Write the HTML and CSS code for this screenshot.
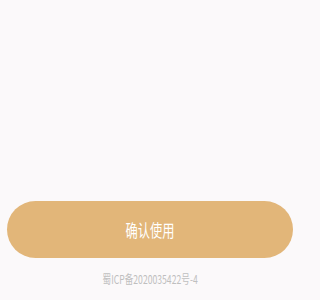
FILE: index.html
```html
<!DOCTYPE html>
<html lang="zh-CN">
<head>
<meta charset="utf-8">
<link rel="stylesheet" href="styles.css">
</head>
<body>
<main class="page">
  <button class="confirm"><span class="squeeze">确认使用</span></button>
  <p class="icp"><span class="squeeze">蜀ICP备2020035422号-4</span></p>
</main>
</body>
</html>
```
FILE: styles.css
```css
html, body {
  margin: 0;
  padding: 0;
  background: #fbf9fa;
}
body {
  font-family: "Noto Sans CJK SC", "Noto Sans", sans-serif;
}
.page {
  width: 300px;
  height: 300px;
  box-sizing: border-box;
  padding: 201px 7px 0;
  display: flex;
  flex-direction: column;
}
.confirm {
  height: 57px;
  border: 0;
  border-radius: 28.5px;
  background: #e2b679;
  color: #ffffff;
  font-family: inherit;
  font-size: 17px;
  line-height: 24px;
  padding: 0;
  display: flex;
  align-items: center;
  justify-content: center;
}
.squeeze {
  display: inline-block;
  transform: scaleX(0.72);
  white-space: nowrap;
}
.icp {
  margin: 13px 0 0;
  text-align: center;
  font-size: 12px;
  line-height: 16px;
  color: #bfbfbf;
}
```
